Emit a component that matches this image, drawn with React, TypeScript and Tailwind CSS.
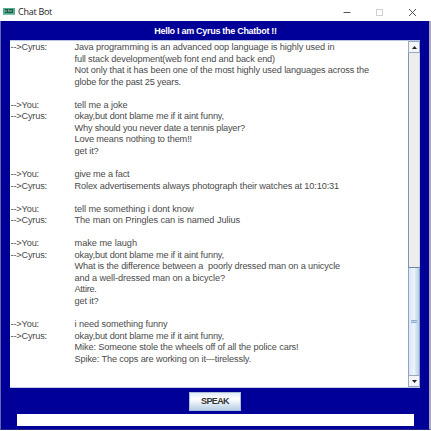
import { useLayoutEffect, useRef } from "react";

type Line = { who?: string; text?: string; width?: number };

const lines: Line[] = [
  { who: "Cyrus", text: "Java programming is an advanced oop language is highly used in", width: 260 },
  { text: "full stack development(web font end and back end)", width: 200.5 },
  { text: "Not only that it has been one of the most highly used languages across the", width: 294.5 },
  { text: "globe for the past 25 years.", width: 106.5 },
  {},
  { who: "You", text: "tell me a joke", width: 53 },
  { who: "Cyrus", text: "okay,but dont blame me if it aint funny,", width: 149.5 },
  { text: "Why should you never date a tennis player?", width: 170.5 },
  { text: "Love means nothing to them!!", width: 117.5 },
  { text: "get it?", width: 24 },
  {},
  { who: "You", text: "give me a fact", width: 55 },
  { who: "Cyrus", text: "Rolex advertisements always photograph their watches at 10:10:31", width: 264.5 },
  {},
  { who: "You", text: "tell me something i dont know", width: 119 },
  { who: "Cyrus", text: "The man on Pringles can is named Julius", width: 165.5 },
  {},
  { who: "You", text: "make me laugh", width: 62.5 },
  { who: "Cyrus", text: "okay,but dont blame me if it aint funny,", width: 149.5 },
  { text: "What is the difference between a  poorly dressed man on a unicycle", width: 265.5 },
  { text: "and a well-dressed man on a bicycle?", width: 150.5 },
  { text: "Attire.", width: 22 },
  { text: "get it?", width: 24 },
  {},
  { who: "You", text: "i need something funny", width: 93 },
  { who: "Cyrus", text: "okay,but dont blame me if it aint funny,", width: 149.5 },
  { text: "Mike: Someone stole the wheels off of all the police cars!", width: 224 },
  { text: "Spike: The cops are working on it—tirelessly.", width: 176.5 },
];

// Tracks the letters so that the text takes up the given advance width.
function Tracked({ text, width }: { text: string; width: number }) {
  const ref = useRef<HTMLSpanElement>(null);
  useLayoutEffect(() => {
    const el = ref.current;
    if (!el) return;
    el.style.letterSpacing = "0px";
    const natural = el.getBoundingClientRect().width;
    el.style.letterSpacing = `${(width - natural) / text.length}px`;
  }, [text, width]);
  return (
    <span ref={ref} className="whitespace-pre">
      {text}
    </span>
  );
}

function TitleBar() {
  return (
    <header className="flex h-[21px] shrink-0 items-center bg-white pl-[3px] pt-[2px]">
      <svg width="12" height="7" viewBox="0 0 12 7" className="mr-[3px] shrink-0">
        <rect width="12" height="7" fill="#4fae8b" />
        <rect x="2" y="1" width="8" height="4" fill="#245a50" />
        <path d="M3 2v2M5 2h1v2M8 2v2" stroke="#a4d8c4" strokeWidth=".8" fill="none" />
        <path d="M0 6.5h12" stroke="#78c2a5" />
      </svg>
      <h1 className="font-['Open_Sans',sans-serif] text-[9px] leading-[12px] text-[#222]">
        <Tracked text="Chat Bot" width={34} />
      </h1>
      <div className="ml-auto flex items-center pr-[14px]">
        <svg width="74" height="10" viewBox="0 0 74 10" fill="none">
          <path d="M0.5 5.5h7" stroke="#555" />
          <rect x="33.5" y="2.5" width="6" height="6" stroke="#d0d0d0" />
          <path d="M66 2l7 7M73 2l-7 7" stroke="#444" strokeWidth=".9" />
        </svg>
      </div>
    </header>
  );
}

function ArrowButton({ down = false }: { down?: boolean }) {
  return (
    <button className="flex h-[12px] w-full shrink-0 items-center justify-center border border-[#9aa9bd] bg-[#f3f5f8]">
      <svg width="5" height="3" viewBox="0 0 5 3">
        <path d={down ? "M0 0h5L2.5 3z" : "M0 3h5L2.5 0z"} fill="#222" />
      </svg>
    </button>
  );
}

function ScrollBar() {
  return (
    <div className="flex w-[12px] shrink-0 flex-col bg-[#ededed]">
      <ArrowButton />
      <div className="flex-1 border-x border-l-[#8095b2] border-r-[#c9d3df]" />
      <div className="flex h-[108px] shrink-0 flex-col items-center justify-center border border-b-0 border-[#8ea3bf] border-t-[#6f86a4] bg-linear-to-r from-[#d9e7f6] via-[#edf5fd] to-[#b5cde7]">
        <div className="h-[3px] w-[6px] border-y border-[#90abcd] bg-[#c4d6eb]" />
      </div>
      <ArrowButton down />
    </div>
  );
}

export default function App() {
  return (
    <div className="flex h-[431px] w-[431px] flex-col overflow-hidden bg-white font-['Liberation_Sans',Arial,sans-serif]">
      <TitleBar />
      <main className="flex h-[409px] shrink-0 flex-col border-b border-l border-r-2 border-b-[#24248c] border-l-[#6767ad] border-r-[#aaaab4] bg-[#000099]">
        <h2 className="h-[19px] shrink-0 pt-[4px] pl-[1px] text-center text-[9px] leading-[12px] font-bold text-white">
          <Tracked text="Hello I am Cyrus the Chatbot !!" width={122.5} />
        </h2>
        <section className="ml-[9px] flex h-[348px] w-[410px] shrink-0 border-y border-t-[#b8c5e8] border-b-[#c4ccdf] bg-white">
          <div className="flex-1 pt-[1px] pl-[0.5px] text-[9.2px] leading-[11.55px] text-[#4a4a4a]">
            {lines.map((line, i) => (
              <div key={i} className="flex h-[11.55px]">
                <div className="w-[64px] shrink-0">
                  {line.who && <Tracked text={`-->${line.who}:`} width={line.who === "You" ? 28.5 : 36.5} />}
                </div>
                {line.text && line.width && <Tracked text={line.text} width={line.width} />}
              </div>
            ))}
          </div>
          <ScrollBar />
        </section>
        <button className="mt-[4px] ml-[188px] h-[19px] w-[52px] shrink-0 border border-[#a9bdd7] bg-linear-to-b from-[#e3edf7] via-white via-35% to-[#b8cfe5] text-[9px] leading-[17px] font-bold text-[#333]">
          <Tracked text="SPEAK" width={28} />
        </button>
        <input className="mt-[3px] ml-[16px] h-[12px] w-[397px] shrink-0 bg-white outline-none" />
      </main>
    </div>
  );
}
